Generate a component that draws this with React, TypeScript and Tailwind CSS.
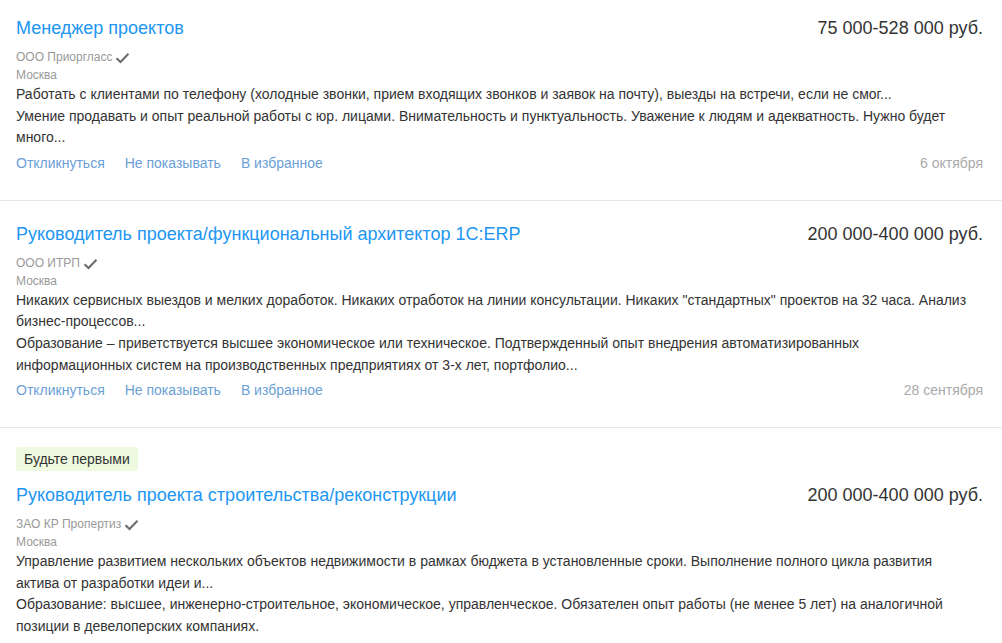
import React from 'react'

interface Vacancy {
  title: string
  salary: string
  company: string
  city: string
  lines: string[]
  date?: string
  badge?: string
}

const vacancies: Vacancy[] = [
  {
    title: 'Менеджер проектов',
    salary: '75 000-528 000 руб.',
    company: 'ООО Приоргласс',
    city: 'Москва',
    lines: [
      'Работать с клиентами по телефону (холодные звонки, прием входящих звонков и заявок на почту), выезды на встречи, если не смог...',
      'Умение продавать и опыт реальной работы с юр. лицами. Внимательность и пунктуальность. Уважение к людям и адекватность. Нужно будет много...',
    ],
    date: '6 октября',
  },
  {
    title: 'Руководитель проекта/функциональный архитектор 1С:ERP',
    salary: '200 000-400 000 руб.',
    company: 'ООО ИТРП',
    city: 'Москва',
    lines: [
      'Никаких сервисных выездов и мелких доработок. Никаких отработок на линии консультации. Никаких "стандартных" проектов на 32 часа. Анализ бизнес-процессов...',
      'Образование – приветствуется высшее экономическое или техническое. Подтвержденный опыт внедрения автоматизированных информационных систем на производственных предприятиях от 3-х лет, портфолио...',
    ],
    date: '28 сентября',
  },
  {
    title: 'Руководитель проекта строительства/реконструкции',
    salary: '200 000-400 000 руб.',
    company: 'ЗАО КР Пропертиз',
    city: 'Москва',
    badge: 'Будьте первыми',
    lines: [
      'Управление развитием нескольких объектов недвижимости в рамках бюджета в установленные сроки. Выполнение полного цикла развития актива от разработки идеи и...',
      'Образование: высшее, инженерно-строительное, экономическое, управленческое. Обязателен опыт работы (не менее 5 лет) на аналогичной позиции в девелоперских компаниях.',
    ],
    date: '25 сентября',
  },
]

function Check() {
  return (
    <svg width="15" height="12" viewBox="0 0 15 12" className="ml-[3px] mt-[1px]">
      <path d="M1.5 6.2 L5.5 10 L13.5 1.8" fill="none" stroke="#6b6b6b" strokeWidth="2" />
    </svg>
  )
}

function VacancyCard({ v, first }: { v: Vacancy; first: boolean }) {
  // первая карточка обрезана сверху, у карточки с бейджем отступ чуть меньше
  const top = first ? 'pt-4' : v.badge ? 'pt-[19px]' : 'pt-[21px]'
  return (
    <div className={`px-4 pr-[19px] pb-[27px] border-b border-[#e6e6e6] ${top}`}>
      {v.badge && (
        <div className="mb-3">
          <span className="inline-block bg-[#eefadf] text-[#333] text-sm leading-6 px-2 rounded-[3px]">
            {v.badge}
          </span>
        </div>
      )}
      <div className="flex items-start justify-between">
        <a className="text-[18px] leading-6 text-[#2196f3] cursor-pointer">{v.title}</a>
        <div className="text-[18px] leading-6 text-[#333]">{v.salary}</div>
      </div>
      <div className="mt-[9px] flex items-center text-xs leading-[17px] text-[#999]">
        {v.company}
        <Check />
      </div>
      <div className="text-xs leading-[18px] text-[#999]">{v.city}</div>
      <div className="w-[955px] text-sm leading-[21.6px] text-[#333]">
        {v.lines.map((l, i) => (
          <div key={i}>{l}</div>
        ))}
      </div>
      <div className="mt-1 flex items-center justify-between text-sm leading-5">
        <div className="flex gap-5 text-[#6b9fd6]">
          <a className="cursor-pointer">Откликнуться</a>
          <a className="cursor-pointer">Не показывать</a>
          <a className="cursor-pointer">В избранное</a>
        </div>
        <div className="text-[#aaa]">{v.date}</div>
      </div>
    </div>
  )
}

export default function App() {
  return (
    <div className="w-[1002px] h-[643px] overflow-hidden bg-white" style={{ fontFamily: '"Liberation Sans", Arial, sans-serif' }}>
      {vacancies.map((v, i) => (
        <VacancyCard key={i} v={v} first={i === 0} />
      ))}
    </div>
  )
}
